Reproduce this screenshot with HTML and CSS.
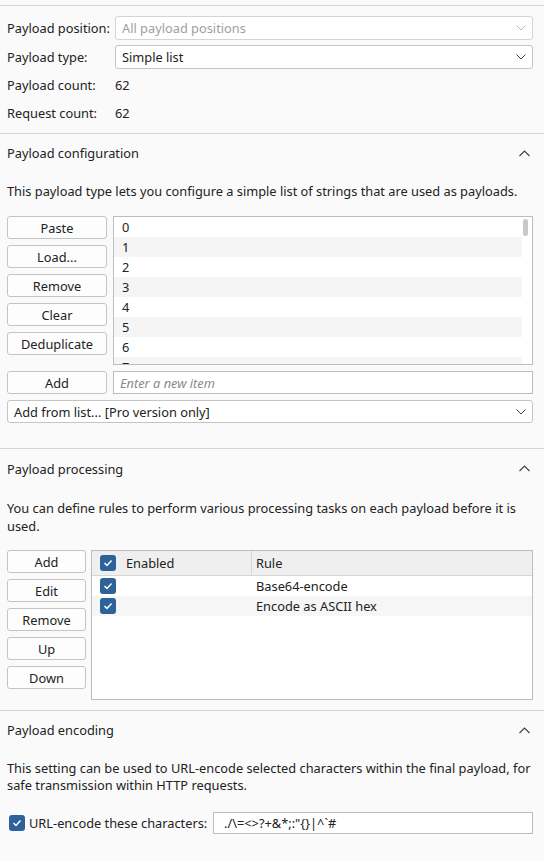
FILE: index.html
```html
<!DOCTYPE html>
<html>
<head>
<meta charset="utf-8">
<link rel="stylesheet" href="styles.css">
</head>
<body>
<div class="page">
  <section class="sec sec-top">
    <div class="form">
      <div class="lbl">Payload position:</div>
      <div class="select disabled"><span>All payload positions</span><svg class="dd" width="10" height="6" viewBox="0 0 10 6"><polyline points="0.5,0.5 5,5 9.5,0.5" fill="none" stroke="#b8b8b8" stroke-width="1"/></svg></div>
      <div class="lbl">Payload type:</div>
      <div class="select"><span>Simple list</span><svg class="dd" width="10" height="6" viewBox="0 0 10 6"><polyline points="0.5,0.5 5,5 9.5,0.5" fill="none" stroke="#444" stroke-width="1"/></svg></div>
      <div class="lbl">Payload count:</div>
      <div class="val">62</div>
      <div class="lbl">Request count:</div>
      <div class="val">62</div>
    </div>
  </section>

  <section class="sec">
    <div class="head"><span>Payload configuration</span><svg width="11" height="7" viewBox="0 0 11 7"><polyline points="0.5,6 5.5,1 10.5,6" fill="none" stroke="#444" stroke-width="1.2"/></svg></div>
    <p class="desc">This payload type lets you configure a simple list of strings that are used as payloads.</p>
    <div class="cfg">
      <div class="btns wide">
        <button>Paste</button>
        <button>Load...</button>
        <button>Remove</button>
        <button>Clear</button>
        <button>Deduplicate</button>
      </div>
      <div class="list">
        <div class="rows">
          <div class="row">0</div>
          <div class="row">1</div>
          <div class="row">2</div>
          <div class="row">3</div>
          <div class="row">4</div>
          <div class="row">5</div>
          <div class="row">6</div>
          <div class="row last">7</div>
        </div>
        <div class="thumb"></div>
      </div>
      <button class="addbtn">Add</button>
      <div class="field placeholder">Enter a new item</div>
      <div class="select full"><span>Add from list... [Pro version only]</span><svg class="dd" width="10" height="6" viewBox="0 0 10 6"><polyline points="0.5,0.5 5,5 9.5,0.5" fill="none" stroke="#444" stroke-width="1"/></svg></div>
    </div>
  </section>

  <section class="sec">
    <div class="head head-proc"><span>Payload processing</span><svg width="11" height="7" viewBox="0 0 11 7"><polyline points="0.5,6 5.5,1 10.5,6" fill="none" stroke="#444" stroke-width="1.2"/></svg></div>
    <p class="desc desc-proc">You can define rules to perform various processing tasks on each payload before it is used.</p>
    <div class="proc">
      <div class="btns narrow">
        <button>Add</button>
        <button>Edit</button>
        <button>Remove</button>
        <button>Up</button>
        <button>Down</button>
      </div>
      <div class="table">
        <div class="trow thead">
          <div class="c1"><span class="cb"><svg width="10" height="8" viewBox="0 0 10 8"><polyline points="1.5,4 4,6.5 8.5,1.5" fill="none" stroke="#fff" stroke-width="1.5"/></svg></span><span>Enabled</span></div>
          <div class="c2">Rule</div>
        </div>
        <div class="trow">
          <div class="c1"><span class="cb"><svg width="10" height="8" viewBox="0 0 10 8"><polyline points="1.5,4 4,6.5 8.5,1.5" fill="none" stroke="#fff" stroke-width="1.5"/></svg></span></div>
          <div class="c2">Base64-encode</div>
        </div>
        <div class="trow alt">
          <div class="c1"><span class="cb"><svg width="10" height="8" viewBox="0 0 10 8"><polyline points="1.5,4 4,6.5 8.5,1.5" fill="none" stroke="#fff" stroke-width="1.5"/></svg></span></div>
          <div class="c2">Encode as ASCII hex</div>
        </div>
      </div>
    </div>
  </section>

  <section class="sec">
    <div class="head"><span>Payload encoding</span><svg width="11" height="7" viewBox="0 0 11 7"><polyline points="0.5,6 5.5,1 10.5,6" fill="none" stroke="#444" stroke-width="1.2"/></svg></div>
    <p class="desc desc-enc">This setting can be used to URL-encode selected characters within the final payload, for safe transmission within HTTP requests.</p>
    <div class="enc">
      <span class="cb"><svg width="10" height="8" viewBox="0 0 10 8"><polyline points="1.5,4 4,6.5 8.5,1.5" fill="none" stroke="#fff" stroke-width="1.5"/></svg></span>
      <span class="enc-lbl">URL-encode these characters:</span>
      <div class="field chars">./\=&lt;&gt;?+&amp;*;:"{}|^`#</div>
    </div>
  </section>
</div>
</body>
</html>
```
FILE: styles.css
```css
* { box-sizing: border-box; }
html, body { margin: 0; padding: 0; }
body {
  background: #fafafa;
  color: #222;
  font-family: "Noto Sans", "Open Sans", sans-serif;
  font-size: 12.8px;
  line-height: 18px;
  width: 544px;
  height: 861px;
  overflow: hidden;
}
.page { padding-top: 5px; }
.sec { border-top: 1px solid #d4d4d4; padding: 0 11px 0 7px; }
.sec-top { padding-top: 10px; padding-bottom: 8px; }
.form {
  display: grid;
  grid-template-columns: 108px 1fr;
  grid-template-rows: 24px 24px 22px 24px;
  row-gap: 5px;
  align-items: center;
}
.select {
  height: 24px;
  border: 1px solid #c4c4c4;
  border-radius: 3px;
  background: #fff;
  display: flex;
  align-items: center;
  justify-content: space-between;
  padding: 0 6px 0 6px;
}
.select.disabled { color: #a0a0a0; border-color: #d4d4d4; }
.head {
  height: 38px;
  display: flex;
  align-items: center;
  justify-content: space-between;
  padding-right: 3px;
}
.head-proc { height: 39px; }
.desc { margin: 10px -8px 0 0; }
.desc-proc { margin-top: 11px; }
.desc-enc { margin-top: 11px; line-height: 17px; }
button {
  font: inherit;
  color: #222;
  height: 23px;
  padding: 0;
  background: #fdfdfd;
  border: 1px solid #c4c4c4;
  border-radius: 3px;
}
.cfg {
  margin-top: 16px;
  display: grid;
  grid-template-columns: 100px 1fr;
  column-gap: 6px;
  row-gap: 6px;
  padding-bottom: 25px;
}
.btns { display: flex; flex-direction: column; gap: 6px; }
.list {
  position: relative;
  height: 149px;
  border: 1px solid #bdbdbd;
  background: #fff;
  overflow: hidden;
}
.rows { padding-right: 10px; height: 147px; overflow: hidden; }
.row { height: 20px; line-height: 20px; padding-left: 8px; }
.row:nth-child(even) { background: #f5f5f5; }
.thumb {
  position: absolute;
  right: 4px;
  top: 2px;
  width: 5px;
  height: 17px;
  border-radius: 3px;
  background: #c8c8c8;
}
.field {
  height: 23px;
  border: 1px solid #bdbdbd;
  background: #fff;
  display: flex;
  align-items: center;
  padding-left: 6px;
}
.placeholder { font-style: italic; color: #8a8a8a; }
.select.full { grid-column: 1 / 3; height: 23px; }
.proc {
  margin-top: 15px;
  display: grid;
  grid-template-columns: 79px 1fr;
  column-gap: 5px;
  padding-bottom: 10px;
}
.table {
  height: 150px;
  border: 1px solid #bdbdbd;
  background: #fff;
}
.trow { display: flex; height: 20px; align-items: center; }
.trow.alt { background: #f6f6f6; }
.thead { height: 25px; background: #efefef; border-bottom: 1px solid #d6d6d6; }
.c1 { width: 160px; height: 100%; display: flex; align-items: center; padding-left: 8px; gap: 10px; }
.thead .c1 { border-right: 1px solid #d6d6d6; }
.c2 { padding-left: 4px; }
.cb {
  width: 16px;
  height: 16px;
  border-radius: 3px;
  background: #2d629b;
  display: inline-flex;
  align-items: center;
  justify-content: center;
  flex: none;
}
.enc {
  margin-top: 18px;
  display: flex;
  align-items: center;
  padding-left: 2px;
  padding-bottom: 11px;
}
.enc-lbl { margin-left: 4px; width: 184px; }
.chars { flex: 1; height: 22px; padding-left: 10px; }
```
